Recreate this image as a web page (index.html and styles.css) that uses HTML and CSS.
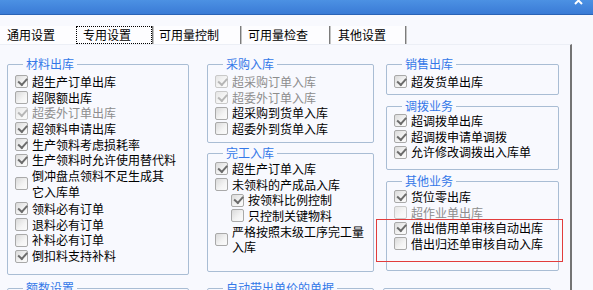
FILE: index.html
```html
<!DOCTYPE html>
<html lang="zh-CN">
<head>
<meta charset="utf-8">
<title>专用设置</title>
<link rel="stylesheet" href="styles.css">
</head>
<body>
<div class="window">
  <div class="titlebar">
    <svg class="close" width="10" height="6" viewBox="0 0 10 6"><path d="M1 -3 L8 4 M8 -3 L1 4" stroke="#fff" stroke-width="2" fill="none"/></svg>
  </div>
  <div class="tabs">
    <span class="tab t1">通用设置</span>
    <span class="tab t2 active">专用设置</span><span class="sep"></span>
    <span class="tab t3">可用量控制</span><span class="sep"></span>
    <span class="tab t4">可用量检查</span><span class="sep"></span>
    <span class="tab t5">其他设置</span><span class="sep"></span>
  </div>
  <div class="panel">
    <div class="grid">
      <div class="col">
        <div class="box h-cl">
          <div class="legend">材料出库</div>
          <div class="rows">
            <div class="row"><span class="cb on"></span><span class="lbl">超生产订单出库</span></div>
            <div class="row"><span class="cb"></span><span class="lbl">超限额出库</span></div>
            <div class="row dis"><span class="cb on"></span><span class="lbl">超委外订单出库</span></div>
            <div class="row"><span class="cb on"></span><span class="lbl">超领料申请出库</span></div>
            <div class="row"><span class="cb on"></span><span class="lbl">生产领料考虑损耗率</span></div>
            <div class="row"><span class="cb on"></span><span class="lbl">生产领料时允许使用替代料</span></div>
            <div class="row wrap"><span class="cb"></span><span class="lbl">倒冲盘点领料不足生成其<br>它入库单</span></div>
            <div class="row"><span class="cb on"></span><span class="lbl">领料必有订单</span></div>
            <div class="row"><span class="cb"></span><span class="lbl">退料必有订单</span></div>
            <div class="row"><span class="cb"></span><span class="lbl">补料必有订单</span></div>
            <div class="row"><span class="cb on"></span><span class="lbl">倒扣料支持补料</span></div>
          </div>
        </div>
      </div>
      <div class="col">
        <div class="box h-cg">
          <div class="legend">采购入库</div>
          <div class="rows">
            <div class="row dis"><span class="cb on"></span><span class="lbl">超采购订单入库</span></div>
            <div class="row dis"><span class="cb on"></span><span class="lbl">超委外订单入库</span></div>
            <div class="row"><span class="cb"></span><span class="lbl">超采购到货单入库</span></div>
            <div class="row"><span class="cb"></span><span class="lbl">超委外到货单入库</span></div>
          </div>
        </div>
        <div class="box h-wg gap10">
          <div class="legend">完工入库</div>
          <div class="rows tight">
            <div class="row"><span class="cb on"></span><span class="lbl">超生产订单入库</span></div>
            <div class="row"><span class="cb"></span><span class="lbl">未领料的产成品入库</span></div>
            <div class="row sub"><span class="cb on"></span><span class="lbl">按领料比例控制</span></div>
            <div class="row sub"><span class="cb"></span><span class="lbl">只控制关键物料</span></div>
            <div class="row wrap"><span class="cb"></span><span class="lbl">严格按照末级工序完工量<br>入库</span></div>
          </div>
        </div>
      </div>
      <div class="col">
        <div class="box h-xs">
          <div class="legend">销售出库</div>
          <div class="rows">
            <div class="row"><span class="cb on"></span><span class="lbl">超发货单出库</span></div>
          </div>
        </div>
        <div class="box h-db gap11">
          <div class="legend">调拨业务</div>
          <div class="rows tighter">
            <div class="row"><span class="cb on"></span><span class="lbl">超调拨单出库</span></div>
            <div class="row"><span class="cb on"></span><span class="lbl">超调拨申请单调拨</span></div>
            <div class="row"><span class="cb on"></span><span class="lbl">允许修改调拨出入库单</span></div>
          </div>
        </div>
        <div class="box h-qt gap11">
          <div class="legend">其他业务</div>
          <div class="rows tight">
            <div class="row"><span class="cb on"></span><span class="lbl">货位零出库</span></div>
            <div class="row dis"><span class="cb"></span><span class="lbl">超作业单出库</span></div>
            <div class="row"><span class="cb on"></span><span class="lbl">借出借用单审核自动出库</span></div>
            <div class="row"><span class="cb"></span><span class="lbl">借出归还单审核自动入库</span></div>
          </div>
        </div>
      </div>
      <div class="col">
        <div class="box h-low">
          <div class="legend">额数设置</div>
        </div>
      </div>
      <div class="col">
        <div class="box h-low">
          <div class="legend">自动带出单价的单据</div>
        </div>
      </div>
      <div class="col">
        <div class="box h-low shift"></div>
      </div>
    </div>
  </div>
  <div class="mark"></div>
</div>
</body>
</html>
```

FILE: styles.css
```css
* { box-sizing: border-box; }

html, body {
  margin: 0;
  padding: 0;
}

body {
  font-family: "Noto Sans CJK SC", "Noto Sans", sans-serif;
  font-size: 12px;
  color: #000;
  background: #f8f9fe;
}

.window {
  position: relative;
  width: 593px;
  height: 290px;
  overflow: hidden;
  background: #f8f9fe;
}

.titlebar {
  height: 15px;
  background: linear-gradient(#4c91e3, #3a7bd6);
  border-bottom: 1px solid #2a63b6;
  display: flex;
  justify-content: flex-end;
  align-items: flex-start;
  padding-right: 9px;
}

.close { display: block; }

.tabs {
  margin-top: 11px;
  height: 18px;
  display: flex;
  align-items: stretch;
}

.tab {
  display: flex;
  align-items: center;
  line-height: 12px;
  background: #fdfdff;
  white-space: nowrap;
}

.t1 { width: 76px; padding-left: 7px; }
.t2 { width: 76px; padding-left: 6px; border: 1px dotted #000; }
.t3 { width: 86px; padding-left: 5px; }
.t4 { width: 87px; padding-left: 6px; }
.t5 { width: 74px; padding-left: 7px; }

.sep {
  width: 2px;
  border-left: 1px solid #7c7c7c;
  border-right: 1px solid #c4c4c4;
}

.panel {
  width: 572px;
  height: 300px;
  border-top: 1px solid #eceff6;
  border-right: 2px solid #747474;
  padding: 19px 0 0 7px;
}

.grid {
  display: grid;
  grid-template-columns: 182px 167px 167px;
  column-gap: 18px;
  row-gap: 13px;
}

.grid .col:nth-child(3) { margin-left: -6px; }
.grid .col:nth-child(6) { margin-left: -6px; }

.box {
  border: 1px solid #a9bdd4;
  border-radius: 2px;
  padding: 0 6px 0 7px;
}

.h-cl { height: 211px; }
.h-cg { height: 79px; }
.h-wg { height: 119px; }
.h-xs { height: 31px; }
.h-db { height: 64px; }
.h-qt { height: 90px; }
.h-low { height: 40px; }

.gap10 { margin-top: 10px; }
.gap11 { margin-top: 11px; }

.shift { margin-left: -3px; width: 168px; }

.legend {
  width: fit-content;
  margin: -7px 0 0 8px;
  padding: 0 3px;
  line-height: 12px;
  color: #3478e8;
  background: #f8f9fe;
  white-space: nowrap;
}

.rows { padding-top: 4px; }
.rows.tight { padding-top: 2px; }
.rows.tighter { padding-top: 1px; }

.row {
  display: flex;
  align-items: center;
  height: 15.7px;
  white-space: nowrap;
}

.row.wrap {
  height: auto;
  padding-bottom: 2px;
}

.lbl { line-height: 12px; }

.row.wrap .lbl { line-height: 15.5px; }

.row.sub { padding-left: 16px; }

.cb {
  position: relative;
  flex: none;
  width: 13px;
  height: 13px;
  margin-right: 4px;
  border: 1px solid #a9a9a9;
  border-radius: 2px;
  background: linear-gradient(135deg, #dadada, #f4f4f4 60%, #fbfbfb);
}

.cb.on::after {
  content: "";
  position: absolute;
  left: 2px;
  top: 1.5px;
  width: 7px;
  height: 3.5px;
  border-left: 2px solid #6c6c6c;
  border-bottom: 2px solid #6c6c6c;
  transform: rotate(-48deg);
}

.dis .lbl { color: #8d8d8d; }
.dis .cb { border-color: #c9c9c9; background: linear-gradient(135deg, #e6e6e6, #f6f6f6 60%, #fbfbfb); }
.dis .cb.on::after { border-color: #b6b6b6; }

.mark {
  position: absolute;
  left: 376px;
  top: 219px;
  width: 187px;
  height: 43px;
  border: 1px solid #e23c3c;
}
```
